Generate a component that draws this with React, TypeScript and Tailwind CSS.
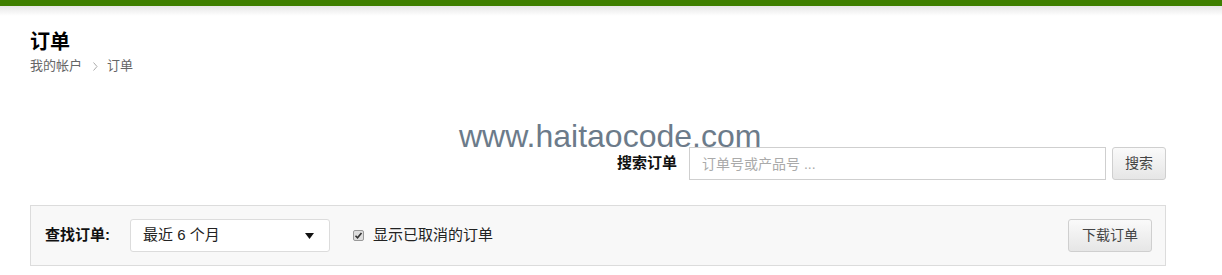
import React, { useState } from "react";

const font = {
  fontFamily: '"Liberation Sans", "Noto Sans CJK SC", sans-serif',
};

const Breadcrumb: React.FC = () => (
  <div className="flex items-center text-[13px] leading-[16px] text-[#666] mt-[3px]">
    <span>我的帐户</span>
    <svg className="ml-[11px] mr-[9px]" width="5" height="9" viewBox="0 0 5 9">
      <path d="M0.5 0.5l3.5 4-3.5 4" stroke="#aaa" strokeWidth="1" fill="none" />
    </svg>
    <span>订单</span>
  </div>
);

const OrderFilter: React.FC = () => {
  const [showCancelled, setShowCancelled] = useState(true);

  return (
    <div className="mt-[25px] mr-[56px] h-[61px] flex items-center border border-[#dcdcdc] bg-[#f8f8f8] pl-[14px] pr-[13px]">
      <span className="text-[15px] font-bold text-[#111] mr-[20px]">查找订单:</span>
      <div className="w-[200px] h-[33px] flex items-center justify-between bg-white border border-[#dcdcdc] rounded-[3px] pl-[12px] pr-[15px] text-[15px] text-[#222]">
        <span>最近 6 个月</span>
        <svg width="9" height="6" viewBox="0 0 9 6">
          <path d="M0 0h9L4.5 6z" fill="#111" />
        </svg>
      </div>
      <label className="flex items-center ml-[23px] text-[15px] text-[#222] cursor-pointer">
        <span
          onClick={() => setShowCancelled(!showCancelled)}
          className="w-[11px] h-[11px] rounded-[2px] border border-[#999] bg-[#ddd] flex items-center justify-center mr-[9px]"
        >
          {showCancelled && (
            <svg width="9" height="9" viewBox="0 0 9 9">
              <path d="M1.5 4.8l2 2 4-4.8" stroke="#333" strokeWidth="1.6" fill="none" />
            </svg>
          )}
        </span>
        显示已取消的订单
      </label>
      <button className="ml-auto h-[33px] px-[13px] text-[14px] text-[#444] border border-[#cfcfcf] rounded-[3px] bg-gradient-to-b from-[#fafafa] to-[#e6e6e6]">
        下载订单
      </button>
    </div>
  );
};

export default function App() {
  return (
    <div className="w-[1222px] h-[275px] bg-white relative overflow-hidden" style={font}>
      <div className="h-[6px] bg-[#3f7f00]" />
      <div className="h-[10px] bg-gradient-to-b from-[#e6e6e6] to-white" />
      <div className="pl-[30px]">
        <h1 className="mt-[14px] text-[20px] leading-[25px] font-bold text-black">订单</h1>
        <Breadcrumb />

        <div className="mt-[73px] flex items-center justify-end mr-[56px]">
          <span className="text-[15px] font-bold text-[#111] mr-[12px]">搜索订单</span>
          <input
            className="w-[417px] h-[33px] border border-[#cfcfcf] bg-white px-[12px] text-[14px] outline-none placeholder:text-[#aaa]"
            placeholder="订单号或产品号 ..."
          />
          <button className="ml-[6px] h-[33px] w-[54px] text-[14px] text-[#444] border border-[#cfcfcf] rounded-[3px] bg-gradient-to-b from-[#fafafa] to-[#e6e6e6]">
            搜索
          </button>
        </div>

        <OrderFilter />
      </div>

      <div className="absolute left-[459px] top-[118px] text-[32px] leading-[36px] text-[#6c7b8a] pointer-events-none">
        www.haitaocode.com
      </div>
    </div>
  );
}
